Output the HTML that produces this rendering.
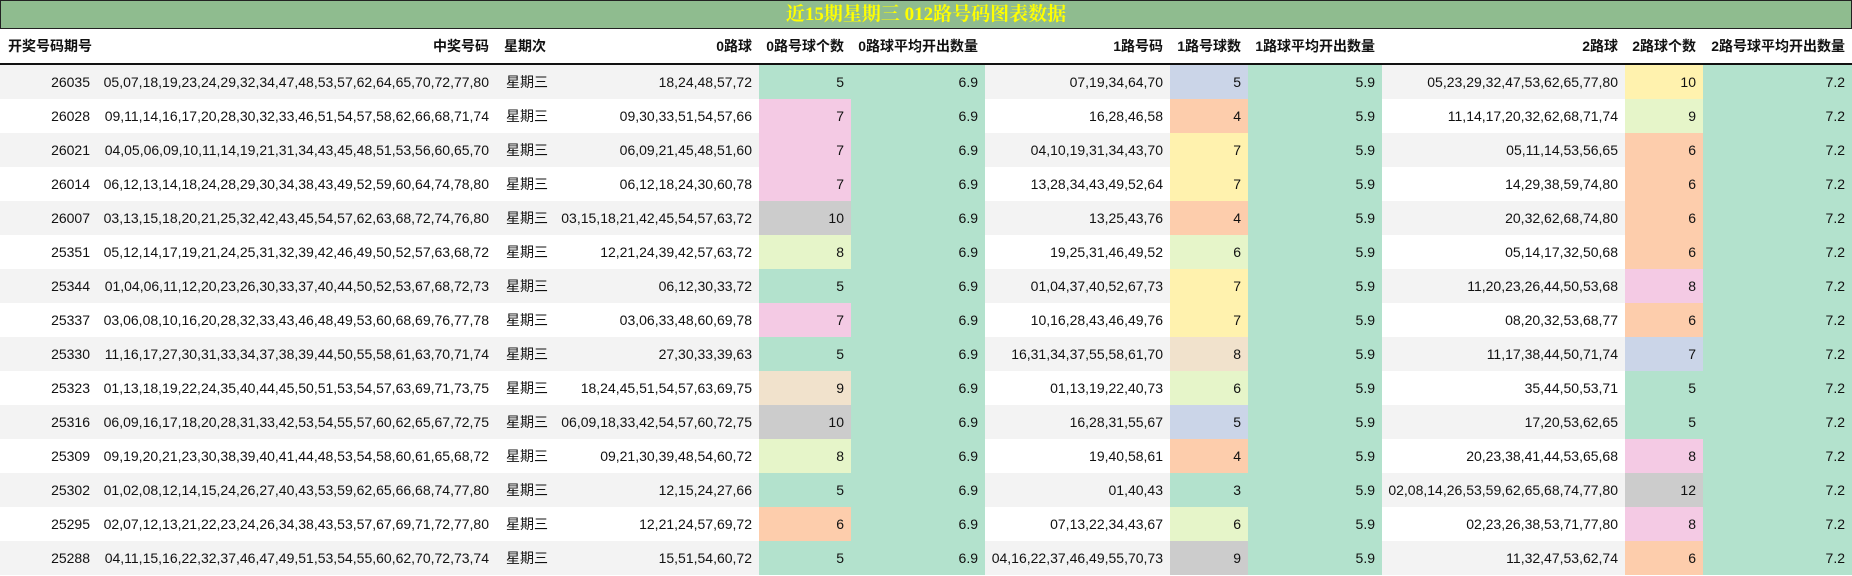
<!DOCTYPE html>
<html><head><meta charset="utf-8"><style>
body{margin:0;background:#fff;width:1852px;height:576px;overflow:hidden;font-family:"Liberation Sans","Noto Sans CJK SC",sans-serif;}
.title{position:absolute;left:0;top:0;width:1850px;height:27px;background:#8fbc8f;border:1px solid #222;color:#ffff00;font-family:"Liberation Serif","Noto Serif CJK SC",serif;font-weight:bold;font-size:19px;text-align:center;line-height:27px;}
table{position:absolute;left:0;top:29px;border-collapse:collapse;table-layout:fixed;width:1852px;font-size:14px;color:#111;}
td,th{padding:0 7px 0 0;text-align:right;white-space:nowrap;overflow:hidden;height:34px;}
th{height:34px;border-bottom:2px solid #111;font-weight:bold;background:#fff;}
th.l{text-align:left;padding-left:8px}
td.w{text-align:left;padding-left:10px}
tr:nth-child(even) td{background:#f3f3f3}
tr:nth-child(odd) td{background:#fff}
td.a{background:#b3e2cd!important}
td.g{background:#b3e2cd!important}td.o{background:#fdcdac!important}td.b{background:#cbd5e8!important}td.p{background:#f4cae4!important}td.lg{background:#e6f5c9!important}td.y{background:#fff2ae!important}td.be{background:#f1e2cc!important}td.gr{background:#cccccc!important}
</style></head><body>
<div class="title">近15期星期三 012路号码图表数据</div>
<table>
<colgroup><col style="width:97px"><col style="width:399px"><col style="width:59px"><col style="width:204px"><col style="width:92px"><col style="width:134px"><col style="width:185px"><col style="width:78px"><col style="width:134px"><col style="width:243px"><col style="width:78px"><col style="width:149px"></colgroup>
<tr><th class="l">开奖号码期号</th><th>中奖号码</th><th class="l">星期次</th><th>0路球</th><th>0路号球个数</th><th>0路球平均开出数量</th><th>1路号码</th><th>1路号球数</th><th>1路球平均开出数量</th><th>2路球</th><th>2路球个数</th><th>2路号球平均开出数量</th></tr>
<tr><td>26035</td><td>05,07,18,19,23,24,29,32,34,47,48,53,57,62,64,65,70,72,77,80</td><td class="w">星期三</td><td>18,24,48,57,72</td><td class="g">5</td><td class="a">6.9</td><td>07,19,34,64,70</td><td class="b">5</td><td class="a">5.9</td><td>05,23,29,32,47,53,62,65,77,80</td><td class="y">10</td><td class="a">7.2</td></tr>
<tr><td>26028</td><td>09,11,14,16,17,20,28,30,32,33,46,51,54,57,58,62,66,68,71,74</td><td class="w">星期三</td><td>09,30,33,51,54,57,66</td><td class="p">7</td><td class="a">6.9</td><td>16,28,46,58</td><td class="o">4</td><td class="a">5.9</td><td>11,14,17,20,32,62,68,71,74</td><td class="lg">9</td><td class="a">7.2</td></tr>
<tr><td>26021</td><td>04,05,06,09,10,11,14,19,21,31,34,43,45,48,51,53,56,60,65,70</td><td class="w">星期三</td><td>06,09,21,45,48,51,60</td><td class="p">7</td><td class="a">6.9</td><td>04,10,19,31,34,43,70</td><td class="y">7</td><td class="a">5.9</td><td>05,11,14,53,56,65</td><td class="o">6</td><td class="a">7.2</td></tr>
<tr><td>26014</td><td>06,12,13,14,18,24,28,29,30,34,38,43,49,52,59,60,64,74,78,80</td><td class="w">星期三</td><td>06,12,18,24,30,60,78</td><td class="p">7</td><td class="a">6.9</td><td>13,28,34,43,49,52,64</td><td class="y">7</td><td class="a">5.9</td><td>14,29,38,59,74,80</td><td class="o">6</td><td class="a">7.2</td></tr>
<tr><td>26007</td><td>03,13,15,18,20,21,25,32,42,43,45,54,57,62,63,68,72,74,76,80</td><td class="w">星期三</td><td>03,15,18,21,42,45,54,57,63,72</td><td class="gr">10</td><td class="a">6.9</td><td>13,25,43,76</td><td class="o">4</td><td class="a">5.9</td><td>20,32,62,68,74,80</td><td class="o">6</td><td class="a">7.2</td></tr>
<tr><td>25351</td><td>05,12,14,17,19,21,24,25,31,32,39,42,46,49,50,52,57,63,68,72</td><td class="w">星期三</td><td>12,21,24,39,42,57,63,72</td><td class="lg">8</td><td class="a">6.9</td><td>19,25,31,46,49,52</td><td class="lg">6</td><td class="a">5.9</td><td>05,14,17,32,50,68</td><td class="o">6</td><td class="a">7.2</td></tr>
<tr><td>25344</td><td>01,04,06,11,12,20,23,26,30,33,37,40,44,50,52,53,67,68,72,73</td><td class="w">星期三</td><td>06,12,30,33,72</td><td class="g">5</td><td class="a">6.9</td><td>01,04,37,40,52,67,73</td><td class="y">7</td><td class="a">5.9</td><td>11,20,23,26,44,50,53,68</td><td class="p">8</td><td class="a">7.2</td></tr>
<tr><td>25337</td><td>03,06,08,10,16,20,28,32,33,43,46,48,49,53,60,68,69,76,77,78</td><td class="w">星期三</td><td>03,06,33,48,60,69,78</td><td class="p">7</td><td class="a">6.9</td><td>10,16,28,43,46,49,76</td><td class="y">7</td><td class="a">5.9</td><td>08,20,32,53,68,77</td><td class="o">6</td><td class="a">7.2</td></tr>
<tr><td>25330</td><td>11,16,17,27,30,31,33,34,37,38,39,44,50,55,58,61,63,70,71,74</td><td class="w">星期三</td><td>27,30,33,39,63</td><td class="g">5</td><td class="a">6.9</td><td>16,31,34,37,55,58,61,70</td><td class="be">8</td><td class="a">5.9</td><td>11,17,38,44,50,71,74</td><td class="b">7</td><td class="a">7.2</td></tr>
<tr><td>25323</td><td>01,13,18,19,22,24,35,40,44,45,50,51,53,54,57,63,69,71,73,75</td><td class="w">星期三</td><td>18,24,45,51,54,57,63,69,75</td><td class="be">9</td><td class="a">6.9</td><td>01,13,19,22,40,73</td><td class="lg">6</td><td class="a">5.9</td><td>35,44,50,53,71</td><td class="g">5</td><td class="a">7.2</td></tr>
<tr><td>25316</td><td>06,09,16,17,18,20,28,31,33,42,53,54,55,57,60,62,65,67,72,75</td><td class="w">星期三</td><td>06,09,18,33,42,54,57,60,72,75</td><td class="gr">10</td><td class="a">6.9</td><td>16,28,31,55,67</td><td class="b">5</td><td class="a">5.9</td><td>17,20,53,62,65</td><td class="g">5</td><td class="a">7.2</td></tr>
<tr><td>25309</td><td>09,19,20,21,23,30,38,39,40,41,44,48,53,54,58,60,61,65,68,72</td><td class="w">星期三</td><td>09,21,30,39,48,54,60,72</td><td class="lg">8</td><td class="a">6.9</td><td>19,40,58,61</td><td class="o">4</td><td class="a">5.9</td><td>20,23,38,41,44,53,65,68</td><td class="p">8</td><td class="a">7.2</td></tr>
<tr><td>25302</td><td>01,02,08,12,14,15,24,26,27,40,43,53,59,62,65,66,68,74,77,80</td><td class="w">星期三</td><td>12,15,24,27,66</td><td class="g">5</td><td class="a">6.9</td><td>01,40,43</td><td class="g">3</td><td class="a">5.9</td><td>02,08,14,26,53,59,62,65,68,74,77,80</td><td class="gr">12</td><td class="a">7.2</td></tr>
<tr><td>25295</td><td>02,07,12,13,21,22,23,24,26,34,38,43,53,57,67,69,71,72,77,80</td><td class="w">星期三</td><td>12,21,24,57,69,72</td><td class="o">6</td><td class="a">6.9</td><td>07,13,22,34,43,67</td><td class="lg">6</td><td class="a">5.9</td><td>02,23,26,38,53,71,77,80</td><td class="p">8</td><td class="a">7.2</td></tr>
<tr><td>25288</td><td>04,11,15,16,22,32,37,46,47,49,51,53,54,55,60,62,70,72,73,74</td><td class="w">星期三</td><td>15,51,54,60,72</td><td class="g">5</td><td class="a">6.9</td><td>04,16,22,37,46,49,55,70,73</td><td class="gr">9</td><td class="a">5.9</td><td>11,32,47,53,62,74</td><td class="o">6</td><td class="a">7.2</td></tr>
</table>
</body></html>
